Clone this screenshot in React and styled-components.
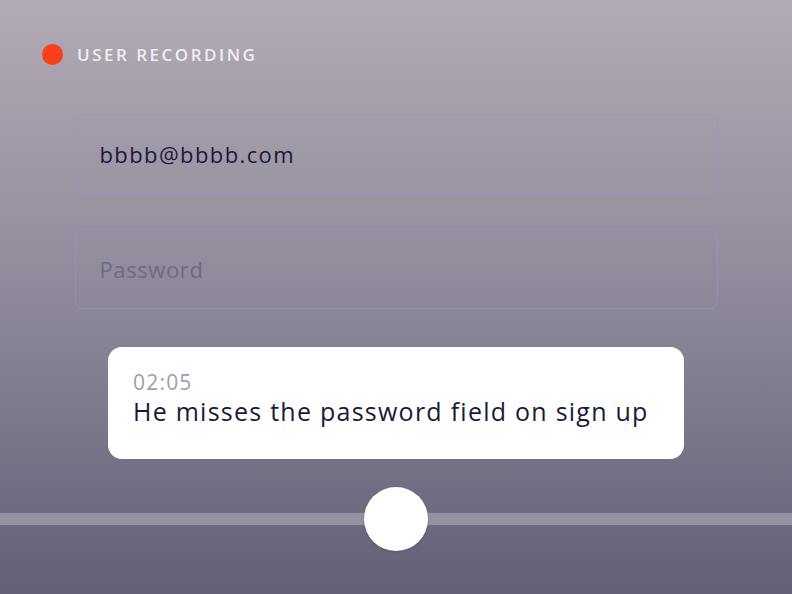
import React from "react";
import styled, { createGlobalStyle } from "styled-components";

const Global = createGlobalStyle`
  html, body {
    margin: 0;
    padding: 0;
  }
  body {
    font-family: "Open Sans", Lato, sans-serif;
  }
`;

const Page = styled.div`
  width: 792px;
  height: 594px;
  overflow: hidden;
  background: linear-gradient(180deg, #b2abb5 0%, #8e889a 50%, #655f77 100%);
  display: flex;
  flex-direction: column;
`;

const Header = styled.div`
  display: flex;
  align-items: center;
  gap: 14px;
  padding: 44px 0 0 42px;
  height: 21px;
`;

const Dot = styled.span`
  width: 21px;
  height: 21px;
  border-radius: 50%;
  background: #f8401c;
`;

const Label = styled.span`
  color: #f0edf4;
  font-size: 17px;
  font-weight: 600;
  letter-spacing: 2.5px;
`;

const Form = styled.div`
  display: flex;
  flex-direction: column;
  gap: 35px;
  width: 643px;
  margin: 49px auto 0;
`;

const Field = styled.div`
  height: 78px;
  border: 1px solid rgba(150, 150, 200, 0.55);
  border-radius: 8px;
  display: flex;
  align-items: center;
  padding: 0 24px;
  font-size: 22px;
  letter-spacing: ${(p) => (p.$placeholder ? "0.6px" : "1.4px")};
  color: ${(p) => (p.$placeholder ? "#6f6a80" : "#1b1a38")};
`;

const Card = styled.div`
  width: 576px;
  height: 112px;
  box-sizing: border-box;
  margin: 38px auto 0;
  background: #fff;
  border-radius: 14px;
  padding: 22px 25px 0;
`;

const Time = styled.div`
  font-size: 21px;
  color: #a19daf;
  line-height: 26px;
  letter-spacing: 1.2px;
`;

const Note = styled.div`
  font-size: 25px;
  color: #1a1a38;
  line-height: 32px;
  letter-spacing: 1.25px;
`;

const Slider = styled.div`
  position: relative;
  margin-top: 28px;
  height: 64px;
  display: flex;
  justify-content: center;
  align-items: center;

  &::before {
    content: "";
    position: absolute;
    left: 0;
    right: 0;
    top: 26px;
    height: 12px;
    background: #9692a2;
  }
`;

const Thumb = styled.div`
  position: relative;
  width: 64px;
  height: 64px;
  border-radius: 50%;
  background: #fff;
  box-shadow: 0 1px 3px rgba(0, 0, 0, 0.15);
`;

export default function App() {
  return (
    <Page>
      <Global />
      <Header>
        <Dot />
        <Label>USER RECORDING</Label>
      </Header>
      <Form>
        <Field>bbbb@bbbb.com</Field>
        <Field $placeholder>Password</Field>
      </Form>
      <Card>
        <Time>02:05</Time>
        <Note>He misses the password field on sign up</Note>
      </Card>
      <Slider>
        <Thumb />
      </Slider>
    </Page>
  );
}
